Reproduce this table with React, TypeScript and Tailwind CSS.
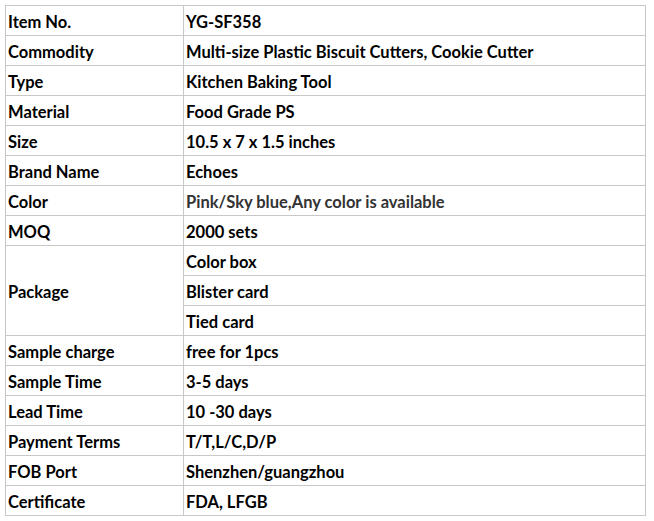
const rows: [string, string][] = [
  ['Item No.', 'YG-SF358'],
  ['Commodity', 'Multi-size Plastic Biscuit Cutters, Cookie Cutter'],
  ['Type', 'Kitchen Baking Tool'],
  ['Material', 'Food Grade PS'],
  ['Size', '10.5 x 7 x 1.5 inches'],
  ['Brand Name', 'Echoes'],
  ['Color', 'Pink/Sky blue,Any color is available'],
  ['MOQ', '2000 sets'],
]

const rowsAfter: [string, string][] = [
  ['Sample charge', 'free for 1pcs'],
  ['Sample Time', '3-5 days'],
  ['Lead Time', '10 -30 days'],
  ['Payment Terms', 'T/T,L/C,D/P'],
  ['FOB Port', 'Shenzhen/guangzhou'],
  ['Certificate', 'FDA, LFGB'],
]

const packages = ['Color box', 'Blister card', 'Tied card']

const cell = 'h-[30px] border border-[#c8c8c8] px-[2px] pt-[4px] align-middle leading-none'

export default function App() {
  return (
    <div className="min-h-[521px] bg-white pl-[5px] pt-[5px] font-['Lato',sans-serif] text-[16.5px] font-bold text-black">
      <table className="w-[641px] table-fixed border-collapse">
        <colgroup>
          <col className="w-[178px]" />
          <col />
        </colgroup>
        <tbody>
          {rows.map(([label, value]) => (
            <tr key={label}>
              <td className={cell}>{label}</td>
              <td className={`${cell} ${label === 'Color' ? 'text-[#333]' : ''}`}>{value}</td>
            </tr>
          ))}
          {packages.map((p, i) => (
            <tr key={p}>
              {i === 0 && (
                <td rowSpan={3} className={cell}>
                  Package
                </td>
              )}
              <td className={cell}>{p}</td>
            </tr>
          ))}
          {rowsAfter.map(([label, value]) => (
            <tr key={label}>
              <td className={cell}>{label}</td>
              <td className={cell}>{value}</td>
            </tr>
          ))}
        </tbody>
      </table>
    </div>
  )
}
